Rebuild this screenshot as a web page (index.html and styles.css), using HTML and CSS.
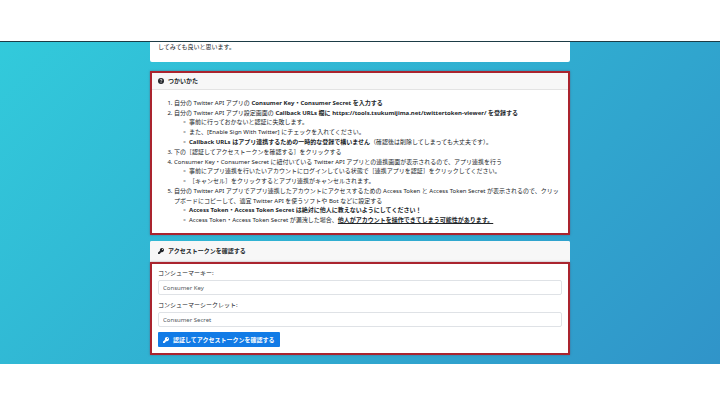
FILE: index.html
```
<!DOCTYPE html>
<html lang="ja">
  <head>
    <meta charset="utf-8">
    <meta name="viewport" content="width=device-width, initial-scale=1">
    <title>Twitter Token Viewer</title>
    <link rel="stylesheet" href="styles.css">
  </head>
  <body>
    <svg class="sprite" aria-hidden="true">
      <symbol id="key" viewBox="0 0 512 512">
        <path d="M512 176c0 97.2-78.8 176-176 176-11.2 0-22.2-1.1-32.8-3.1l-24 27A24 24 0 0 1 261.200 384H224v40c0 13.300-10.700 24-24 24h-40v40c0 13.300-10.700 24-24 24H24c-13.300 0-24-10.700-24-24v-78.100c0-6.400 2.500-12.500 7-17l161.800-161.800C163 213.800 160 195.300 160 176 160 78.800 238.800 0 336 0s176 78.500 176 176zM336 128c0 26.500 21.500 48 48 48s48-21.500 48-48-21.500-48-48-48-48 21.500-48 48z"/>
      </symbol>
      <symbol id="question" viewBox="0 0 16 16">
        <circle cx="8" cy="8" r="8"/>
        <path d="M5.500 6c0-3.600 5.200-3.300 5.200-.4C10.700 7.600 8.100 7.500 8.100 9.600" fill="none" stroke="#fff" stroke-width="2"/>
        <circle cx="8.100" cy="12.200" r="1.300" fill="#fff"/>
      </symbol>
    </svg>
    <main class="page">
      <div class="container">
        <section class="card intro">
          <p>してみても良いと思います。</p>
        </section>
        <section class="card usage marked">
          <h2 class="card-header"><svg class="icon"><use href="#question"/></svg>つかいかた</h2>
          <div class="card-body">
            <ol>
              <li>自分の Twitter API アプリの <b>Consumer Key・Consumer Secret を入力する</b></li>
              <li>自分の Twitter API アプリ設定画面の <b>Callback URLs 欄に https://tools.tsukumijima.net/twittertoken-viewer/ を登録する</b>
                <ul>
                  <li>事前に行っておかないと認証に失敗します。</li>
                  <li>また、[Enable Sign With Twitter] にチェックを入れてください。</li>
                  <li><b>Callback URLs はアプリ連携するための一時的な登録で構いません</b>（確認後は削除してしまっても大丈夫です）。</li>
                </ul>
              </li>
              <li>下の［認証してアクセストークンを確認する］をクリックする</li>
              <li>Consumer Key・Consumer Secret に紐付いている Twitter API アプリとの連携画面が表示されるので、アプリ連携を行う
                <ul>
                  <li>事前にアプリ連携を行いたいアカウントにログインしている状態で［連携アプリを認証］をクリックしてください。</li>
                  <li>［キャンセル］をクリックするとアプリ連携がキャンセルされます。</li>
                </ul>
              </li>
              <li>自分の Twitter API アプリでアプリ連携したアカウントにアクセスするための Access Token と Access Token Secret が表示されるので、クリップボードにコピーして、適宜 Twitter API を使うソフトや Bot などに設定する
                <ul>
                  <li><b>Access Token・Access Token Secret は絶対に他人に教えないようにしてください！</b></li>
                  <li>Access Token・Access Token Secret が漏洩した場合、<b><u>他人がアカウントを操作できてしまう可能性があります。</u></b></li>
                </ul>
              </li>
            </ol>
          </div>
        </section>
        <section class="card viewer">
          <h2 class="card-header"><svg class="icon"><use href="#key"/></svg>アクセストークンを確認する</h2>
          <form class="card-form marked">
            <div class="field">
              <label for="consumer-key">コンシューマーキー:</label>
              <input id="consumer-key" type="text" placeholder="Consumer Key">
            </div>
            <div class="field">
              <label for="consumer-secret">コンシューマーシークレット:</label>
              <input id="consumer-secret" type="text" placeholder="Consumer Secret">
            </div>
            <button type="button"><svg class="icon"><use href="#key"/></svg>認証してアクセストークンを確認する</button>
          </form>
        </section>
      </div>
    </main>
  </body>
</html>
```
FILE: styles.css
```
* {
    box-sizing: border-box;
}
body {
    margin: 0;
    padding: 41px 0;
    background-color: #fff;
    color: #212529;
    font-family: "Noto Sans", "Noto Sans CJK JP", sans-serif;
    font-size: 6px;
    line-height: 10px;
}
.sprite {
    display: none;
}
.page {
    border-top: 1px solid #1d3c46;
    padding-bottom: 9px;
    background: linear-gradient(135deg, #32cadb 0%, #30acd0 55%, #3094c9 100%);
}
.container {
    width: 100%;
    max-width: 420px;
    margin: 0 auto;
}
.card {
    background-color: #fff;
    border-radius: 2px;
}
.intro {
    padding: 0 8px 10px;
    border-radius: 0 0 2px 2px;
    margin-bottom: 9px;
}
.intro p {
    margin: 0;
}
.marked {
    border: 2px solid #aa242e;
    border-radius: 0;
    box-shadow: 0 0 2px rgba(90, 60, 90, 0.5);
}
.card-header {
    display: flex;
    align-items: center;
    gap: 4px;
    margin: 0;
    padding: 4px 8px 6px;
    background-color: #f7f7f7;
    font-size: 6px;
    font-weight: bold;
}
.icon {
    width: 6px;
    height: 6px;
    fill: currentColor;
    flex-shrink: 0;
}
.usage {
    margin-bottom: 6px;
}
.usage .card-header {
    padding: 3px 6px;
    border-bottom: 1px solid #e3e3e3;
}
.card-body {
    padding: 8px 6px;
}
ol, ul {
    margin: 0;
}
ol {
    padding-left: 16px;
}
/* sub-lists sit a bit tighter under their parent line */
ul {
    margin-top: -1px;
    padding-left: 15px;
    list-style-type: "◦ ";
}
.viewer .card-header {
    padding: 5px 8px 6px;
    border-radius: 2px 2px 0 0;
}
.card-form {
    padding: 4px 6px 6px;
}
.field {
    margin-bottom: 5px;
}
label {
    display: block;
    margin-bottom: 2px;
}
input {
    display: block;
    width: 100%;
    height: 15px;
    padding: 0 4px;
    border: 1px solid #dfe2e6;
    border-radius: 2px;
    background-color: #fff;
    color: #495057;
    font: inherit;
}
input::placeholder {
    color: #50575e;
    opacity: 1;
}
button {
    display: flex;
    align-items: center;
    gap: 4px;
    height: 15px;
    padding: 0 5px;
    border: 0;
    border-radius: 1px;
    background-color: #117be6;
    color: #fff;
    font: inherit;
    font-weight: bold;
    cursor: pointer;
}
button:hover {
    background-color: #0069d9;
}
```
